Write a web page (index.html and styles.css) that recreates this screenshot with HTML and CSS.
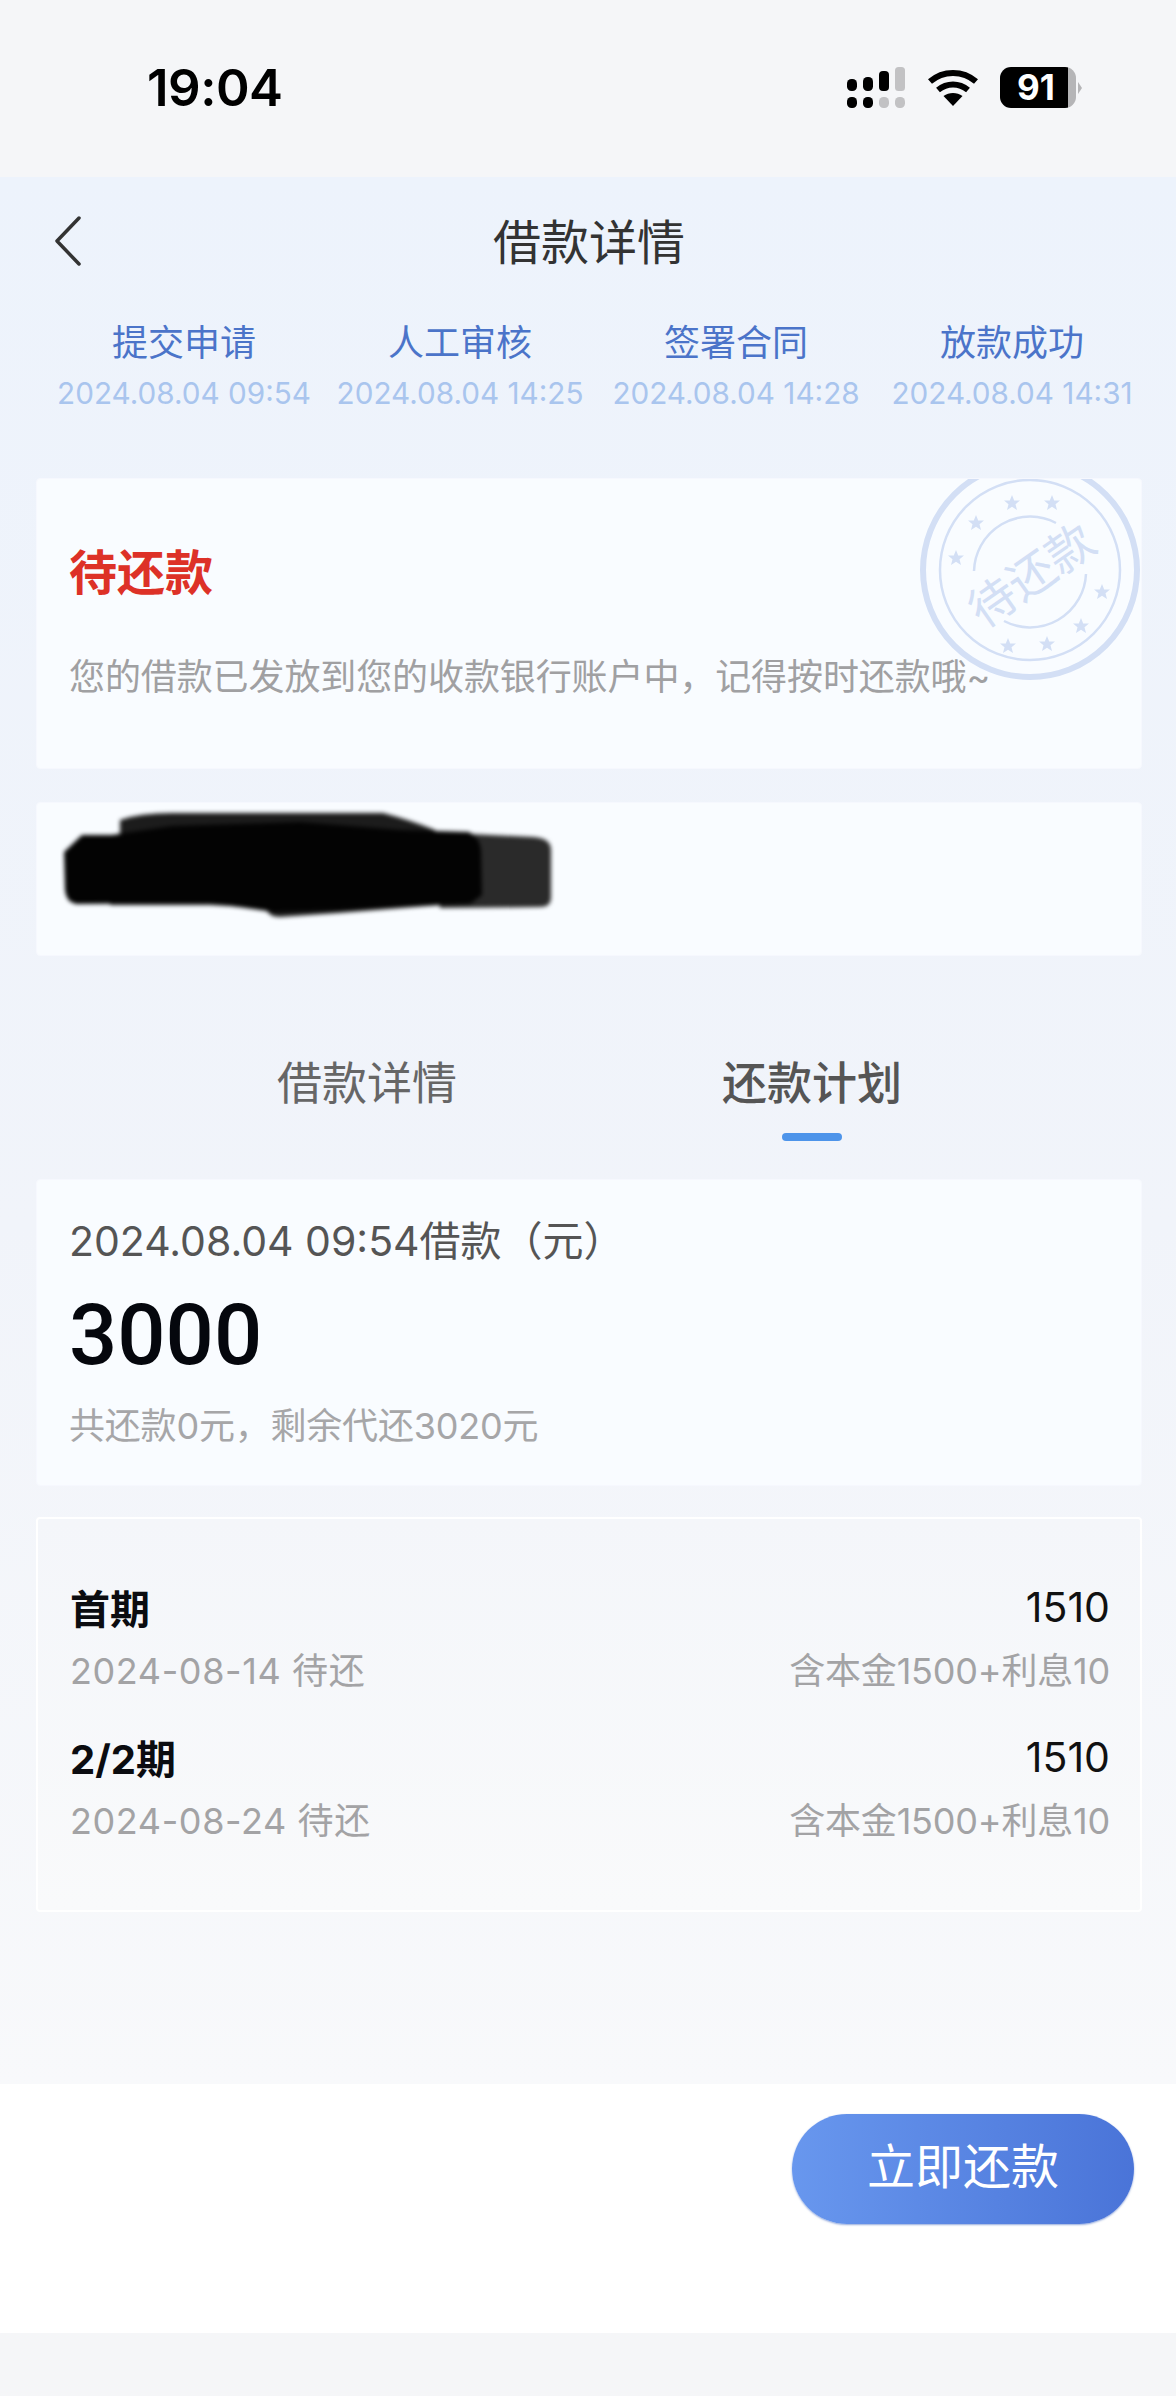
FILE: index.html
```html
<!DOCTYPE html>
<html lang="zh-CN">
<head>
<meta charset="utf-8">
<title>借款详情</title>
<link rel="stylesheet" href="styles.css">
</head>
<body>
<div class="page">
  <header class="status">
    <span class="clock">19:04</span>
    <div class="status-icons">
      <svg class="signal" width="58" height="41" viewBox="0 0 58 41">
        <g fill="#000">
          <rect x="0" y="12" width="10" height="12" rx="4.5"/>
          <rect x="16" y="10" width="10" height="14" rx="4.5"/>
          <rect x="32" y="4" width="10" height="20" rx="4"/>
          <rect x="0" y="30" width="10" height="11" rx="4.5"/>
          <rect x="16" y="30" width="10" height="11" rx="4.5"/>
        </g>
        <g fill="#c2c2c4">
          <rect x="48" y="0" width="10" height="24" rx="3.5"/>
          <rect x="32" y="30" width="10" height="11" rx="4.5"/>
          <rect x="48" y="30" width="10" height="11" rx="4.5"/>
        </g>
      </svg>
      <svg class="wifi" width="50" height="38" viewBox="0 0 50 38">
        <path d="M2 13.5C15 2 35 2 48 13.500" fill="none" stroke="#000" stroke-width="6"/>
        <path d="M10 22C19 14.500 31 14.500 40 22" fill="none" stroke="#000" stroke-width="6"/>
        <path d="M25 38L15.500 28C21 24 29 24 34.500 28Z" fill="#000"/>
      </svg>
      <div class="battery">
        <div class="battery-body"><span class="battery-level">91</span></div>
        <span class="battery-tip"></span>
      </div>
    </div>
  </header>

  <main class="main">
    <div class="nav">
      <svg class="back" width="28" height="50" viewBox="0 0 28 50">
        <path d="M25 2L3 25L25 48" fill="none" stroke="#333" stroke-width="3.500" stroke-linecap="round" stroke-linejoin="round"/>
      </svg>
      <h1 class="nav-title">借款详情</h1>
    </div>

    <ol class="steps">
      <li class="step"><span class="step-name">提交申请</span><span class="step-time">2024.08.04 09:54</span></li>
      <li class="step"><span class="step-name">人工审核</span><span class="step-time">2024.08.04 14:25</span></li>
      <li class="step"><span class="step-name">签署合同</span><span class="step-time">2024.08.04 14:28</span></li>
      <li class="step"><span class="step-name">放款成功</span><span class="step-time">2024.08.04 14:31</span></li>
    </ol>

    <section class="card card-status">
      <svg class="stamp" width="222" height="204" viewBox="920 478 222 204">
        <circle cx="1031" cy="569" r="107" fill="none" stroke="#d3dff5" stroke-width="6"/>
        <circle cx="1031" cy="569" r="90" fill="none" stroke="#d3dff5" stroke-width="2.500"/>
        <path d="M975 570A56 56 0 0 1 1057 522M1087 573A56 56 0 0 1 1005 620" fill="none" stroke="#d3dff5" stroke-width="2.500"/>
        <g fill="#d3dff5">
          <polygon points="0,-8 2.200,-2.500 8,-2.500 3.500,1.200 5,7 0,3.800 -5,7 -3.500,1.200 -8,-2.500 -2.200,-2.500" transform="translate(1013 502)"/>
          <polygon points="0,-8 2.200,-2.500 8,-2.500 3.500,1.200 5,7 0,3.800 -5,7 -3.500,1.200 -8,-2.500 -2.200,-2.500" transform="translate(1053 502)"/>
          <polygon points="0,-8 2.200,-2.500 8,-2.500 3.500,1.200 5,7 0,3.800 -5,7 -3.500,1.200 -8,-2.500 -2.200,-2.500" transform="translate(977 522)"/>
          <polygon points="0,-8 2.200,-2.500 8,-2.500 3.500,1.200 5,7 0,3.800 -5,7 -3.500,1.200 -8,-2.500 -2.200,-2.500" transform="translate(957 557)"/>
          <polygon points="0,-8 2.200,-2.500 8,-2.500 3.500,1.200 5,7 0,3.800 -5,7 -3.500,1.200 -8,-2.500 -2.200,-2.500" transform="translate(1103 591)"/>
          <polygon points="0,-8 2.200,-2.500 8,-2.500 3.500,1.200 5,7 0,3.800 -5,7 -3.500,1.200 -8,-2.500 -2.200,-2.500" transform="translate(1082 625)"/>
          <polygon points="0,-8 2.200,-2.500 8,-2.500 3.500,1.200 5,7 0,3.800 -5,7 -3.500,1.200 -8,-2.500 -2.200,-2.500" transform="translate(1048 643)"/>
          <polygon points="0,-8 2.200,-2.500 8,-2.500 3.500,1.200 5,7 0,3.800 -5,7 -3.500,1.200 -8,-2.500 -2.200,-2.500" transform="translate(1009 645)"/>
        </g>
        <text class="stamp-text" x="1033" y="591" text-anchor="middle" transform="rotate(-35 1033 575)">待还款</text>
      </svg>
      <h2 class="status-title">待还款</h2>
      <p class="status-desc">您的借款已发放到您的收款银行账户中，记得按时还款哦~</p>
    </section>

    <section class="card card-account">
      <svg class="redact" width="500" height="116" viewBox="60 808 500 116">
        <g class="redact-marks">
          <path d="M470 834L533 837Q551 838 551 850L551 898Q551 907 540 907L440 908L430 850Z" fill="#2a2a2a"/>
          <path d="M120 820Q140 813 172 813L383 813Q410 820 435 830L440 905L338 913L280 917Q268 917 266 908L210 905L110 905L120 840Z" fill="#1c1c1c"/>
          <path d="M82 835L112 835L172 826L300 822L400 830L469 832Q480 838 481 850L482 895L470 904L405 906L338 910L274 912L210 903L76 904Q66 902 65 890L64 852Z" fill="#030303"/>
        </g>
      </svg>
    </section>

    <nav class="tabs">
      <span class="tab">借款详情</span>
      <span class="tab tab-active">还款计划</span>
    </nav>

    <section class="card card-summary">
      <p class="sum-date">2024.08.04 09:54借款（元）</p>
      <p class="sum-amount">3000</p>
      <p class="sum-note">共还款0元，剩余代还3020元</p>
    </section>

    <section class="card card-plan">
      <div class="plan-row">
        <div class="plan-line"><strong class="plan-name">首期</strong><span class="plan-money">1510</span></div>
        <div class="plan-line plan-sub"><span class="plan-date">2024-08-14 待还</span><span>含本金1500+利息10</span></div>
      </div>
      <div class="plan-row">
        <div class="plan-line"><strong class="plan-name">2/2期</strong><span class="plan-money">1510</span></div>
        <div class="plan-line plan-sub"><span class="plan-date">2024-08-24 待还</span><span>含本金1500+利息10</span></div>
      </div>
    </section>
  </main>

  <footer class="actions">
    <button class="pay" type="button">立即还款</button>
  </footer>
  <div class="home-strip"></div>
</div>
</body>
</html>
```
FILE: styles.css
```css
* { box-sizing: border-box; }
html, body { margin: 0; padding: 0; }
body {
  background: #f5f6f8;
  font-family: "Inter", "Noto Sans CJK SC", "Liberation Sans", sans-serif;
  color: #222;
}
h1, h2, p, ol { margin: 0; padding: 0; }
.page {
  width: 1176px;
  height: 2396px;
  display: flex;
  flex-direction: column;
  overflow: hidden;
}

/* status bar */
.status {
  height: 177px;
  flex: none;
  background: #f5f6f8;
  display: flex;
  justify-content: space-between;
  padding: 62px 94px 0 147px;
}
.clock {
  font-size: 51px;
  line-height: 52px;
  font-weight: 600;
  letter-spacing: -0.5px;
  color: #000;
  height: 52px;
}
.status-icons {
  display: flex;
  align-items: flex-start;
  padding-top: 5px;
}
.signal { margin-right: 23px; }
.wifi { margin-top: 1px; margin-right: 22px; }
.battery { display: flex; align-items: center; height: 41px; }
.battery-body {
  width: 76px;
  height: 41px;
  border-radius: 11px;
  overflow: hidden;
  background: linear-gradient(90deg, #000 89%, #b5b5b7 89%);
  display: flex;
  align-items: center;
  padding-left: 17px;
}
.battery-level {
  color: #fff;
  font-size: 35px;
  line-height: 41px;
  font-weight: 700;
}
.battery-tip {
  width: 0;
  height: 0;
  margin-left: 2px;
  border-top: 6px solid transparent;
  border-bottom: 6px solid transparent;
  border-left: 4px solid #b5b5b7;
}

/* main area */
.main {
  flex: 1;
  padding: 0 32px 0 34px;
  background: linear-gradient(180deg, #edf3fc 0%, #f1f4fa 55%, #f8f9fb 100%);
}
.nav {
  height: 130px;
  padding-top: 2px;
  display: flex;
  align-items: center;
  justify-content: center;
  position: relative;
}
.back { position: absolute; left: 20px; top: 39px; }
.nav-title {
  font-size: 48px;
  font-weight: 400;
  line-height: 60px;
  color: #333;
}
.steps {
  list-style: none;
  display: grid;
  grid-template-columns: repeat(4, 276px);
  padding: 11px 0 0 12px;
}
.step {
  display: flex;
  flex-direction: column;
  align-items: center;
}
.step-name {
  font-size: 36px;
  line-height: 50px;
  color: #4b74c9;
}
.step-time {
  margin-top: 6px;
  font-size: 29.700px;
  line-height: 38px;
  color: #a9c5ee;
  white-space: nowrap;
}

/* cards */
.card {
  position: relative;
  margin: 0 2px;
  background: #f9fcff;
  border: 1.500px solid #f6f8fe;
  border-radius: 4px;
}
.card-status {
  margin-top: 66px;
  height: 291px;
  padding: 64px 32px 0;
  overflow: hidden;
}
.stamp { position: absolute; right: 0; top: 0; }
.stamp-text {
  font-size: 47px;
  fill: #d3dff5;
}
.status-title {
  font-size: 48px;
  line-height: 60px;
  font-weight: 700;
  color: #dd3127;
}
.status-desc {
  position: relative;
  margin-top: 49px;
  font-size: 36px;
  line-height: 50px;
  letter-spacing: -0.1px;
  color: #a0a0a2;
  white-space: nowrap;
}
.card-account {
  margin-top: 33px;
  height: 154px;
}
.redact { position: absolute; left: 23px; top: 5px; }
.redact-marks { filter: blur(2px); }

/* tabs */
.tabs {
  height: 155px;
  margin-top: 68px;
  display: flex;
  padding-left: 243px;
  gap: 265px;
  padding-top: 30px;
}
.tab {
  position: relative;
  font-size: 45px;
  line-height: 60px;
  color: #666;
  white-space: nowrap;
  height: 60px;
}
.tab-active {
  font-weight: 500;
  color: #555;
}
.tab-active::after {
  content: "";
  position: absolute;
  left: 60px;
  top: 79px;
  width: 60px;
  height: 8px;
  border-radius: 4px;
  background: #4d94ea;
}

.card-summary {
  height: 307px;
  padding: 31px 32px 0;
}
.sum-date {
  font-size: 41px;
  line-height: 60px;
  color: #555;
  white-space: nowrap;
}
.sum-amount {
  font-family: "Roboto", "Liberation Sans", sans-serif;
  font-size: 85px;
  line-height: 90px;
  font-weight: 500;
  color: #05070d;
  margin-top: 19px;
}
.sum-note {
  font-size: 36px;
  line-height: 50px;
  letter-spacing: -0.2px;
  color: #a6a6a8;
  margin-top: 21px;
}

.card-plan {
  margin-top: 31px;
  height: 395px;
  padding: 58px 30px 0 32px;
  background: linear-gradient(180deg, #f4f6fa, #f9fafb);
  border: 2px solid #fff;
}
.plan-row { height: 150px; }
.plan-line {
  display: flex;
  justify-content: space-between;
  align-items: center;
  height: 60px;
}
.plan-name {
  font-size: 40px;
  font-weight: 700;
  color: #0b0c10;
}
.plan-money {
  font-size: 41px;
  color: #111;
}
.plan-sub {
  margin-top: 2px;
  font-size: 36px;
  letter-spacing: -0.2px;
  color: #a3a3a5;
  height: 58px;
}
.plan-date { letter-spacing: 0.6px; }

/* footer */
.actions {
  flex: none;
  height: 249px;
  background: #fff;
  display: flex;
  justify-content: flex-end;
  padding: 30px 42px 0 0;
}
.pay {
  width: 342px;
  height: 110px;
  border: none;
  border-radius: 55px;
  background: linear-gradient(90deg, #6897ee, #4a74d8);
  box-shadow: 0 1px 2px rgba(60, 100, 190, 0.55);
  color: #fff;
  font-family: inherit;
  font-size: 48px;
  line-height: 60px;
  padding: 0 0 4px;
}
.home-strip {
  flex: none;
  height: 63px;
  background: #f5f6f8;
}
```
